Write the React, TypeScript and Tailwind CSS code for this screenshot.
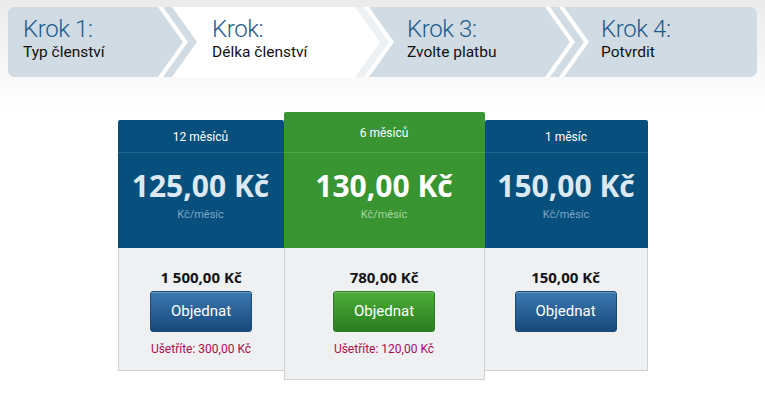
import React from 'react';

const GRAY = '#d0dbe3';

function chevron(a: number) {
  return `0,0 ${a},0 ${a + 25},35 ${a},70 0,70`;
}

function Separator({ left, stripe, right }: { left: string; stripe: string; right: string }) {
  return (
    <svg width="44" height="70" viewBox="0 0 44 70" className="shrink-0 block">
      <rect x="0" y="0" width="44" height="70" fill={right} />
      <polygon points={chevron(19)} fill="#ffffff" />
      <polygon points={chevron(14)} fill={stripe} />
      <polygon points={chevron(5)} fill="#ffffff" />
      <polygon points={chevron(0)} fill={left} />
    </svg>
  );
}

function Step({ title, label, className }: { title: string; label: string; className: string }) {
  return (
    <div className={`shrink-0 h-full pt-[9px] ${className}`}>
      <div className="text-[24px] leading-[26px] font-light tracking-[-0.4px] text-[#1c5b8e]">{title}</div>
      <div className="text-[15.5px] leading-[18px] text-[#111111] mt-[1px]">{label}</div>
    </div>
  );
}

interface Plan {
  months: string;
  price: string;
  total: string;
  savings?: string;
  featured?: boolean;
}

const plans: Plan[] = [
  { months: '12 měsíců', price: '125,00 Kč', total: '1 500,00 Kč', savings: 'Ušetříte: 300,00 Kč' },
  { months: '6 měsíců', price: '130,00 Kč', total: '780,00 Kč', savings: 'Ušetříte: 120,00 Kč', featured: true },
  { months: '1 měsíc', price: '150,00 Kč', total: '150,00 Kč' },
];

function PlanCard({ plan, width, borders }: { plan: Plan; width: string; borders: string }) {
  const f = plan.featured;
  return (
    <div className={`${width} ${f ? 'mt-0 relative z-10' : 'mt-[8px]'} flex flex-col`}>
      <div className={`rounded-t-[2px] ${f ? 'bg-[#389531]' : 'bg-[#07507d]'}`}>
        <div className={`flex items-center justify-center text-white text-[12px] leading-[16px] ${f ? 'h-[40px] pt-[1px]' : 'h-[32px] pt-[1px]'}`}>
          {plan.months}
        </div>
        <div className={`h-px ${f ? 'bg-[#50a647]' : 'bg-[#22648f]'}`} />
        <div className="h-[95px] pt-[15px] flex flex-col items-center">
          <div
            className={`text-[30px] leading-[36px] font-bold ${f ? 'text-white' : 'text-[#dce9f3]'}`}
            style={{ fontFamily: '"Open Sans", sans-serif' }}
          >
            {plan.price}
          </div>
          <div className={`text-[11px] leading-[14px] mt-[4px] ${f ? 'text-[#a9d6a3]' : 'text-[#7ea6c6]'}`}>Kč/měsíc</div>
        </div>
      </div>
      <div className={`bg-[#eef0f2] border-[#cdd0d3] ${borders} flex flex-col items-center pt-[19px] ${f ? 'pb-[22px]' : 'pb-[13px]'}`}>
        <div
          className="text-[15px] leading-[20px] font-bold text-[#141414]"
          style={{ fontFamily: '"Open Sans", sans-serif' }}
        >
          {plan.total}
        </div>
        <button
          className={`mt-[4px] w-[102px] h-[41px] rounded-[3px] text-white text-[15px] border shadow-[inset_0_1px_0_rgba(255,255,255,0.25)] ${
            f
              ? 'bg-gradient-to-b from-[#4cad37] to-[#2b7d1f] border-[#2c7a22]'
              : 'bg-gradient-to-b from-[#3a79b1] to-[#17497a] border-[#1a4a78]'
          }`}
        >
          Objednat
        </button>
        <div className="mt-[9px] h-[16px] text-[12px] leading-[16px] text-[#a8124c]">{plan.savings ?? ''}</div>
      </div>
    </div>
  );
}

export default function App() {
  return (
    <div
      className="w-[765px] h-[400px] bg-[linear-gradient(#ebebeb,#ffffff_110px)] pt-[7px] px-[8px] overflow-hidden"
      style={{ fontFamily: 'Roboto, "Noto Sans", sans-serif' }}
    >
      <div className="flex h-[70px] rounded-[7px] overflow-hidden bg-[#d0dbe3]">
        <Step title="Krok 1:" label="Typ členství" className="w-[150px] pl-[15px] bg-[#d0dbe3]" />
        <Separator left={GRAY} stripe={GRAY} right="#ffffff" />
        <Step title="Krok:" label="Délka členství" className="w-[148px] pl-[10px] bg-white" />
        <Separator left="#ffffff" stripe="#eef1f3" right={GRAY} />
        <Step title="Krok 3:" label="Zvolte platbu" className="w-[151px] pl-[13px]" />
        <Separator left={GRAY} stripe={GRAY} right={GRAY} />
        <Step title="Krok 4:" label="Potvrdit" className="flex-1 pl-[12px]" />
      </div>

      <div className="flex justify-center items-start mt-[35px]">
        <PlanCard plan={plans[0]} width="w-[166px]" borders="border-l border-b" />
        <PlanCard plan={plans[1]} width="w-[201px]" borders="border-l border-r border-b" />
        <PlanCard plan={plans[2]} width="w-[163px]" borders="border-r border-b" />
      </div>
    </div>
  );
}
